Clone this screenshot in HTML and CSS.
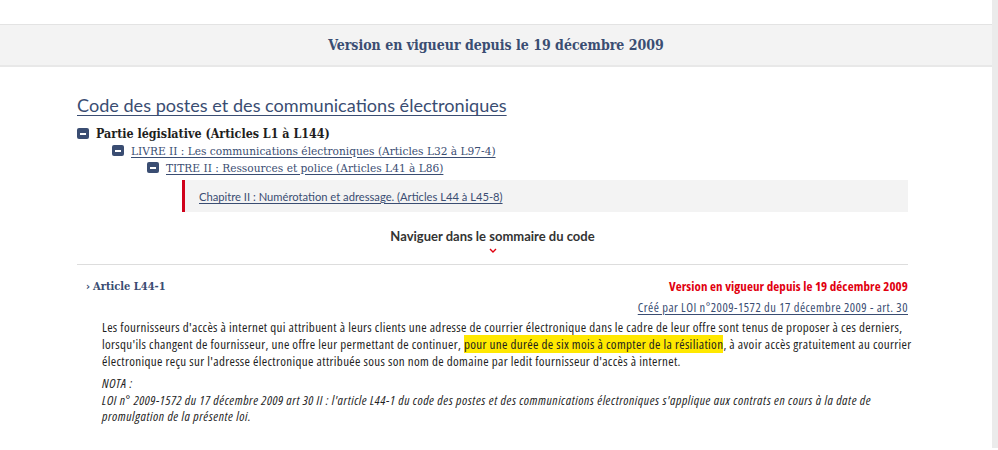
FILE: index.html
```html
<!DOCTYPE html>
<html lang="fr">
<head>
<meta charset="utf-8">
<title>Code des postes et des communications électroniques</title>
<link rel="stylesheet" href="styles.css">
</head>
<body>
<div class="frame">
  <div class="page">
    <div class="topspace"></div>
    <div class="banner">Version en vigueur depuis le 19 décembre 2009</div>
    <main class="content">
      <h1 class="code-title"><a href="#">Code des postes et des communications électroniques</a></h1>
      <ul class="tree">
        <li class="lvl lvl1"><span class="minus"></span><span class="t1">Partie législative (Articles L1 à L144)</span></li>
        <li class="lvl lvl2"><span class="minus"></span><a href="#" class="t2">LIVRE II : Les communications électroniques (Articles L32 à L97-4)</a></li>
        <li class="lvl lvl3"><span class="minus"></span><a href="#" class="t2">TITRE II : Ressources et police (Articles L41 à L86)</a></li>
        <li class="chapter"><a href="#">Chapitre II : Numérotation et adressage. (Articles L44 à L45-8)</a></li>
      </ul>
      <div class="nav-sommaire">
        <span>Naviguer dans le sommaire du code</span>
        <svg class="chev" width="8" height="5" viewBox="0 0 8 5"><path d="M1 1 L4 4 L7 1" fill="none" stroke="#e1000f" stroke-width="1.4"/></svg>
      </div>
      <article class="article">
        <div class="art-head">
          <h2 class="art-title"><span class="arrow">›</span>Article L44-1</h2>
          <div class="art-version">Version en vigueur depuis le 19 décembre 2009</div>
        </div>
        <div class="art-source"><a href="#">Créé par LOI n°2009-1572 du 17 décembre 2009 - art. 30</a></div>
        <div class="art-body">
          <p>Les fournisseurs d'accès à internet qui attribuent à leurs clients une adresse de courrier électronique dans le cadre de leur offre sont tenus de proposer à ces derniers, lorsqu'ils changent de fournisseur, une offre leur permettant de continuer, <mark>pour une durée de six mois à compter de la résiliation</mark>, à avoir accès gratuitement au courrier électronique reçu sur l'adresse électronique attribuée sous son nom de domaine par ledit fournisseur d'accès à internet.</p>
          <div class="nota">
            <p>NOTA :</p>
            <p>LOI n° 2009-1572 du 17 décembre 2009 art 30 II : l'article L44-1 du code des postes et des communications électroniques s'applique aux contrats en cours à la date de promulgation de la présente loi.</p>
          </div>
        </div>
      </article>
    </main>
  </div>
  <div class="edge"></div>
</div>
</body>
</html>
```

FILE: styles.css
```css
html, body {
  margin: 0;
  padding: 0;
  background: #fff;
}
body {
  font-family: "Open Sans", "Lato", sans-serif;
  font-stretch: 75%;
  color: #1e1e1e;
}
a { color: inherit; }

.frame {
  display: flex;
  height: 448px;
}
.page {
  width: 992px;
  flex: none;
}
.edge {
  width: 6px;
  background: #ebebeb;
}

.topspace { height: 24px; }
.banner {
  border-top: 1px solid #e3e3e3;
  border-bottom: 2px solid #e8e8e8;
  background: #f3f3f3;
  height: 40px;
  line-height: 40px;
  text-align: center;
  font-family: "DejaVu Serif", serif;
  font-stretch: condensed;
  font-weight: bold;
  font-size: 14px;
  color: #3a4d72;
}

.content {
  margin-left: 77px;
  width: 831px;
}

.code-title {
  margin: 26px 0 0;
  font-family: "Lato", sans-serif;
  font-stretch: normal;
  font-size: 18.1px;
  font-weight: 400;
  line-height: 24px;
  color: #3a4d72;
}
.code-title a {
  text-decoration-thickness: 1px;
  text-underline-offset: 3px;
}

.tree {
  list-style: none;
  margin: 8px 0 0;
  padding: 0;
}
.lvl {
  display: flex;
  align-items: center;
  gap: 7px;
  height: 17px;
}
.lvl2 { padding-left: 35px; }
.lvl3 { padding-left: 70px; }
.minus {
  width: 12px;
  height: 11px;
  border-radius: 2px;
  background: #3a4d72;
  position: relative;
  flex: none;
}
.minus::after {
  content: "";
  position: absolute;
  left: 3px;
  right: 3px;
  top: 5px;
  height: 1.5px;
  background: #fff;
}
.t1 {
  font-family: "DejaVu Serif", serif;
  font-stretch: condensed;
  font-weight: bold;
  font-size: 12.4px;
  color: #1e1e1e;
}
.t2 {
  font-family: "DejaVu Serif", serif;
  font-stretch: condensed;
  font-size: 11.8px;
  color: #3a4d72;
  text-underline-offset: 2px;
}
.chapter {
  margin: 4px 0 0 105px;
  height: 32px;
  display: flex;
  align-items: center;
  background: #f3f3f3;
  border-left: 3px solid #d0021b;
  padding-left: 14px;
  font-family: "Lato", sans-serif;
  font-stretch: normal;
  font-size: 11.2px;
  color: #3a4d72;
}
.chapter a { text-underline-offset: 2px; }

.nav-sommaire {
  display: flex;
  flex-direction: column;
  align-items: center;
  margin-top: 16px;
  font-family: "Lato", sans-serif;
  font-stretch: normal;
  font-size: 13px;
  font-weight: 700;
  color: #333;
  padding-bottom: 11px;
  border-bottom: 1px solid #dddddd;
}
.nav-sommaire .chev { margin-top: 4px; }

.article { padding-top: 12px; }
.art-head {
  display: flex;
  justify-content: space-between;
  align-items: center;
}
.art-title {
  margin: 0 0 0 9px;
  font-family: "DejaVu Serif", serif;
  font-stretch: condensed;
  font-size: 11px;
  font-weight: bold;
  color: #3a4d72;
}
.arrow {
  font-family: "DejaVu Sans", sans-serif;
  font-weight: bold;
  margin-right: 3px;
}
.art-version {
  font-size: 13px;
  letter-spacing: 0.1px;
  font-weight: 700;
  color: #e1000f;
}
.art-source {
  text-align: right;
  margin-top: 4px;
  font-size: 12.5px;
  letter-spacing: 0.5px;
  color: #3a4d72;
}
.art-source a { text-underline-offset: 2px; }
.art-body {
  padding-left: 25px;
  margin-right: -10px;
  font-size: 13px;
  letter-spacing: 0.35px;
  line-height: 17px;
}
.art-body p { margin: 0; }
.art-body > p { margin-top: 3px; }
mark {
  background: #ffe800;
  color: inherit;
}
.nota {
  margin-top: 5px;
  font-style: italic;
  font-size: 13px;
  letter-spacing: 0.55px;
}
.nota p { line-height: 16.5px; }
```
